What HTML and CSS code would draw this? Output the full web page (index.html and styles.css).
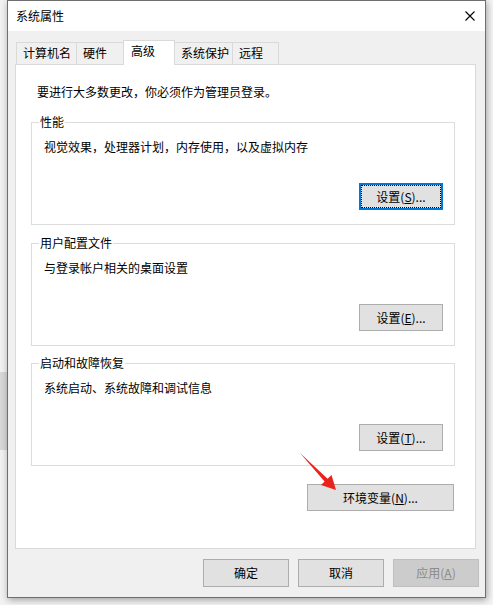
FILE: index.html
```html
<!DOCTYPE html>
<html lang="zh-CN">
<head>
<meta charset="utf-8">
<title>系统属性</title>
<link rel="stylesheet" href="styles.css">
</head>
<body>
<div class="backdrop-strip"><div class="backdrop-app"></div></div>
<div class="window">
  <div class="titlebar">
    <span class="title">系统属性</span>
    <span class="close">
      <svg width="10" height="10" viewBox="0 0 10 10"><path d="M0.5 0.5 L9.5 9.5 M9.5 0.5 L0.5 9.5" stroke="#000" stroke-width="1.1" fill="none"/></svg>
    </span>
  </div>
  <div class="tabs">
    <div class="tab t1">计算机名</div>
    <div class="tab t2">硬件</div>
    <div class="tab t3 selected">高级</div>
    <div class="tab t4">系统保护</div>
    <div class="tab t5">远程</div>
  </div>
  <div class="panel">
    <p class="intro">要进行大多数更改，你必须作为管理员登录。</p>
    <div class="group">
      <span class="group-title">性能</span>
      <p class="desc">视觉效果，处理器计划，内存使用，以及虚拟内存</p>
      <button class="btn small focused">设置(<u>S</u>)...</button>
    </div>
    <div class="group">
      <span class="group-title">用户配置文件</span>
      <p class="desc">与登录帐户相关的桌面设置</p>
      <button class="btn small">设置(<u>E</u>)...</button>
    </div>
    <div class="group g3">
      <span class="group-title">启动和故障恢复</span>
      <p class="desc">系统启动、系统故障和调试信息</p>
      <button class="btn small">设置(<u>T</u>)...</button>
    </div>
    <button class="btn env">环境变量(<u>N</u>)...</button>
  </div>
  <div class="footer">
    <button class="btn foot">确定</button>
    <button class="btn foot">取消</button>
    <button class="btn foot disabled">应用(<u>A</u>)</button>
  </div>
</div>
<svg class="arrow" width="45" height="45" viewBox="295 448 45 45">
  <polygon points="300,453 327.6,478.8 331.5,475 336,490 321,485 324.6,481.6" fill="#e8231b"/>
</svg>
</body>
</html>
```
FILE: styles.css
```css
html, body {
  margin: 0;
  padding: 0;
}
body {
  width: 493px;
  height: 605px;
  overflow: hidden;
  background: #f4f4f4;
  font-family: "Noto Sans CJK SC", "Noto Sans", sans-serif;
  font-size: 12px;
  color: #000;
  display: flex;
  align-items: flex-start;
  position: relative;
}
.backdrop-strip {
  width: 7px;
  height: 605px;
  background: #f2f2f2;
  flex: none;
}
.backdrop-app {
  margin-top: 372px;
  height: 78px;
  background: #d8d8d8;
}
.window {
  flex: none;
  width: 477px;
  height: 596px;
  border: 1px solid #6f6f6f;
  background: #f0f0f0;
  box-shadow: 1px 2px 7px rgba(0, 0, 0, 0.35);
  display: flex;
  flex-direction: column;
}
.titlebar {
  height: 30px;
  background: #fff;
  display: flex;
  align-items: center;
  justify-content: space-between;
  padding: 0 10px 0 8px;
}
.title {
  line-height: 30px;
  padding-bottom: 1px;
}
.close {
  display: flex;
  width: 10px;
  height: 10px;
  margin-top: -1px;
}
.tabs {
  height: 33px;
  display: flex;
  align-items: flex-end;
  padding-left: 8px;
}
.tab {
  box-sizing: border-box;
  height: 22px;
  border: 1px solid #d9d9d9;
  border-bottom: none;
  background: #f0f0f0;
  padding: 2px 0 0 6px;
  line-height: 16px;
  margin-left: -1px;
  white-space: nowrap;
}
.tab.t1 { width: 61px; margin-left: 0; }
.tab.t2 { width: 48px; }
.tab.t3 { width: 52px; }
.tab.t4 { width: 59px; }
.tab.t5 { width: 47px; }
.tab.selected {
  height: 25px;
  margin-bottom: -1px;
  background: #fff;
  padding-left: 7px;
  position: relative;
  z-index: 1;
}
.panel {
  box-sizing: border-box;
  width: 461px;
  height: 485px;
  margin-left: 7px;
  border: 1px solid #d9d9d9;
  background: #fff;
  padding: 19px 0 0 0;
  display: flex;
  flex-direction: column;
}
.intro {
  margin: 0 0 0 21px;
  line-height: 16px;
}
.group {
  box-sizing: border-box;
  position: relative;
  width: 424px;
  height: 103px;
  margin: 22px 0 0 15px;
  border: 1px solid #dcdcdc;
  padding: 16px 11px 14px 12px;
  display: flex;
  flex-direction: column;
  align-items: flex-start;
}
.group + .group {
  margin-top: 18px;
}
.group.g3 {
  margin-top: 17px;
}
.group-title {
  position: absolute;
  top: -9px;
  left: 7px;
  background: #fff;
  padding: 0 1px;
  line-height: 16px;
}
.desc {
  margin: 0;
  line-height: 16px;
}
.btn {
  box-sizing: border-box;
  font-family: inherit;
  font-size: 12px;
  color: #000;
  background: #e1e1e1;
  border: 1px solid #adadad;
  border-radius: 0;
  padding: 0;
  line-height: 16px;
  text-align: center;
}
.btn u {
  text-underline-offset: 1px;
}
.btn.small {
  width: 84px;
  height: 27px;
  margin-top: auto;
  align-self: flex-end;
}
.btn.focused {
  border: 2px solid #0078d7;
  outline: 1px dotted #000;
  outline-offset: -3px;
}
.btn.env {
  width: 147px;
  height: 27px;
  margin: 18px 0 0 291px;
}
.footer {
  display: flex;
  justify-content: flex-end;
  gap: 9px;
  padding: 10px 6px 0 0;
}
.btn.foot {
  width: 86px;
  height: 28px;
}
.btn.disabled {
  background: #cccccc;
  border-color: #bfbfbf;
  color: #8a8a8a;
}
.arrow {
  position: absolute;
  left: 295px;
  top: 448px;
}
```
